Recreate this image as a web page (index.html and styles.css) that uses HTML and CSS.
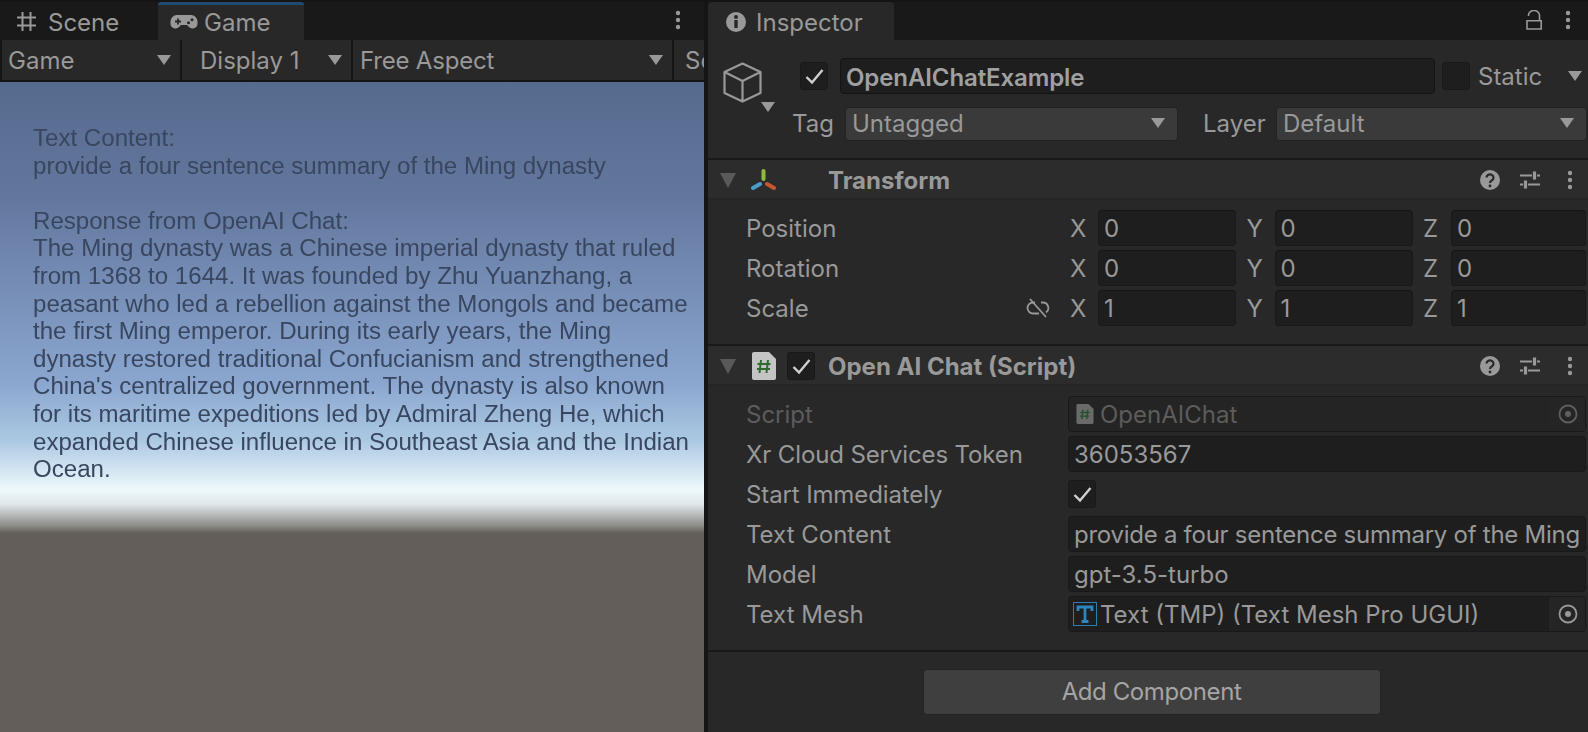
FILE: index.html
```html
<!DOCTYPE html>
<html lang="en">
<head>
<meta charset="utf-8">
<title>Unity Editor</title>
<link rel="stylesheet" href="styles.css">
</head>
<body>
<div class="editor">
  <section class="game-panel">
    <div class="tabbar">
      <div class="tab tab-scene">
        <svg class="tab-icon" viewBox="0 0 21 21"><path d="M6.500 1v19M14.500 1v19M1 6.500h19M1 14.500h19" fill="none" stroke="#999" stroke-width="2"/></svg>
        <span>Scene</span>
      </div>
      <div class="tab tab-game active">
        <svg class="tab-icon-game" viewBox="0 0 28 16"><path d="M7 1h14a6.500 6.500 0 0 1 6.500 6.500v2a5 5 0 0 1-9 3L17 11h-6l-1.500 1.500a5 5 0 0 1-9-3v-2A6.500 6.500 0 0 1 7 1z" fill="#999"/><path d="M5 7.500h6M8 4.500v6" stroke="#262626" stroke-width="1.800"/><circle cx="18.500" cy="8.800" r="1.500" fill="#262626"/><circle cx="22" cy="5.800" r="1.500" fill="#262626"/></svg>
        <span>Game</span>
      </div>
      <div class="spacer"></div>
      <svg class="kebab kebab-left" viewBox="0 0 6 20"><circle cx="3" cy="3" r="2.200"/><circle cx="3" cy="10" r="2.200"/><circle cx="3" cy="17" r="2.200"/></svg>
    </div>
    <div class="toolbar">
      <div class="tool tool-game"><span>Game</span><i class="arrow"></i></div>
      <div class="tool tool-display"><span>Display 1</span><i class="arrow"></i></div>
      <div class="tool tool-aspect"><span>Free Aspect</span><i class="arrow"></i></div>
      <div class="tool tool-scale"><span>Scale</span></div>
    </div>
    <div class="viewport">
      <p class="ui-text">Text Content:<br>provide a four sentence summary of the Ming dynasty<br><br>Response from OpenAI Chat:<br>The Ming dynasty was a Chinese imperial dynasty that ruled<br>from 1368 to 1644. It was founded by Zhu Yuanzhang, a<br>peasant who led a rebellion against the Mongols and became<br>the first Ming emperor. During its early years, the Ming<br>dynasty restored traditional Confucianism and strengthened<br>China's centralized government. The dynasty is also known<br>for its maritime expeditions led by Admiral Zheng He, which<br>expanded Chinese influence in Southeast Asia and the Indian<br>Ocean.</p>
    </div>
  </section>

  <section class="inspector">
    <div class="tabbar">
      <div class="tab tab-inspector">
        <svg class="info-icon" viewBox="0 0 20 20"><circle cx="10" cy="10" r="10" fill="#999"/><rect x="8.300" y="8" width="3.400" height="8" fill="#282828"/><circle cx="10" cy="5" r="2" fill="#282828"/></svg>
        <span>Inspector</span>
      </div>
      <div class="spacer"></div>
      <svg class="lock" viewBox="0 0 16 20"><path d="M2.500 6a5.500 5 0 0 1 11 -1v6M1 10.800h14.200V19H1z" fill="none" stroke="#999" stroke-width="1.600"/></svg>
      <svg class="kebab kebab-right" viewBox="0 0 6 20"><circle cx="3" cy="3" r="2.200"/><circle cx="3" cy="10" r="2.200"/><circle cx="3" cy="17" r="2.200"/></svg>
    </div>

    <div class="object-head">
      <div class="cube-wrap">
        <svg class="cube" viewBox="0 0 39 41"><path d="M19.500 1.500 37.500 10v21l-18 8.500-18-8.500V10zM1.500 10l18 9 18-9M19.500 19v20.500" fill="none" stroke="#999" stroke-width="2.200" stroke-linejoin="round"/></svg>
        <i class="arrow arrow-cube"></i>
      </div>
      <div class="object-rows">
        <div class="name-row">
          <div class="check"><svg viewBox="0 0 20 20"><path d="M2.500 11l5.500 5.500 10.500-12.500" fill="none" stroke="#d0d0d0" stroke-width="2.400"/></svg></div>
          <div class="name-field">OpenAIChatExample</div>
          <div class="check"></div>
          <span class="static-label">Static</span>
          <i class="arrow arrow-static"></i>
        </div>
        <div class="tag-row">
          <span class="tag-label">Tag</span>
          <div class="drop drop-tag"><span>Untagged</span><i class="arrow"></i></div>
          <span class="layer-label">Layer</span>
          <div class="drop drop-layer"><span>Default</span><i class="arrow"></i></div>
        </div>
      </div>
    </div>

    <div class="comp-head">
      <i class="arrow arrow-fold"></i>
      <svg class="axes" viewBox="0 0 25 23"><path d="M12.500 2v8" stroke="#8fb93f" stroke-width="4" stroke-linecap="round"/><path d="M9 15l-7 4" stroke="#4a9cc9" stroke-width="4" stroke-linecap="round"/><path d="M16 15l7 4" stroke="#c9572e" stroke-width="4" stroke-linecap="round"/></svg>
      <span class="comp-title">Transform</span>
      <div class="spacer"></div>
      <svg class="help" viewBox="0 0 20 20"><circle cx="10" cy="10" r="10" fill="#999"/><path d="M6.500 7.500a3.500 3.200 0 1 1 5.200 2.900c-1.200.7-1.700 1.200-1.700 2.600" fill="none" stroke="#282828" stroke-width="2.200"/><circle cx="10" cy="16" r="1.400" fill="#282828"/></svg>
      <svg class="sliders" viewBox="0 0 20 20"><path d="M0 5.500h12M17 5.500h3M0 14.500h3M8 14.500h12" fill="none" stroke="#999" stroke-width="2"/><path d="M14.500 1.500v8M5.500 10.500v8" fill="none" stroke="#999" stroke-width="3.200"/></svg>
      <svg class="kebab kebab-comp" viewBox="0 0 6 20"><circle cx="3" cy="3" r="2.200"/><circle cx="3" cy="10" r="2.200"/><circle cx="3" cy="17" r="2.200"/></svg>
    </div>
    <div class="transform-body">
      <div class="vec-row">
        <span class="label">Position</span><span class="link-slot"></span>
        <span class="axis">X</span><div class="field">0</div>
        <span class="axis">Y</span><div class="field">0</div>
        <span class="axis">Z</span><div class="field field-last">0</div>
      </div>
      <div class="vec-row">
        <span class="label">Rotation</span><span class="link-slot"></span>
        <span class="axis">X</span><div class="field">0</div>
        <span class="axis">Y</span><div class="field">0</div>
        <span class="axis">Z</span><div class="field field-last">0</div>
      </div>
      <div class="vec-row">
        <span class="label">Scale</span>
        <span class="link-slot"><svg class="unlink" viewBox="0 0 24 20"><path d="M9 4.500H7a5.500 5.500 0 0 0 0 11h6M15 4.500h2a5.500 5.500 0 0 1 3 10M4 1l16 18" fill="none" stroke="#999" stroke-width="1.800"/></svg></span>
        <span class="axis">X</span><div class="field">1</div>
        <span class="axis">Y</span><div class="field">1</div>
        <span class="axis">Z</span><div class="field field-last">1</div>
      </div>
    </div>

    <div class="comp-head">
      <i class="arrow arrow-fold"></i>
      <svg class="script-icon" viewBox="0 0 24 28"><path d="M2 0h15l7 7v19a2 2 0 0 1-2 2H2a2 2 0 0 1-2-2V2a2 2 0 0 1 2-2z" fill="#c4c4c4"/><path d="M9 8 7.500 21M16 8l-1.500 13M5.500 12h13M5 17h13" fill="none" stroke="#2f6b2f" stroke-width="2"/></svg>
      <div class="check check-comp"><svg viewBox="0 0 20 20"><path d="M2.500 11l5.500 5.500 10.500-12.500" fill="none" stroke="#d0d0d0" stroke-width="2.400"/></svg></div>
      <span class="comp-title">Open AI Chat (Script)</span>
      <div class="spacer"></div>
      <svg class="help" viewBox="0 0 20 20"><circle cx="10" cy="10" r="10" fill="#999"/><path d="M6.500 7.500a3.500 3.200 0 1 1 5.200 2.900c-1.200.7-1.700 1.200-1.700 2.600" fill="none" stroke="#282828" stroke-width="2.200"/><circle cx="10" cy="16" r="1.400" fill="#282828"/></svg>
      <svg class="sliders" viewBox="0 0 20 20"><path d="M0 5.500h12M17 5.500h3M0 14.500h3M8 14.500h12" fill="none" stroke="#999" stroke-width="2"/><path d="M14.500 1.500v8M5.500 10.500v8" fill="none" stroke="#999" stroke-width="3.200"/></svg>
      <svg class="kebab kebab-comp" viewBox="0 0 6 20"><circle cx="3" cy="3" r="2.200"/><circle cx="3" cy="10" r="2.200"/><circle cx="3" cy="17" r="2.200"/></svg>
    </div>
    <div class="script-body">
      <div class="prop-row disabled">
        <span class="label">Script</span>
        <div class="value value-ref value-dim">
          <svg class="script-icon-small" viewBox="0 0 24 28"><path d="M2 0h15l7 7v19a2 2 0 0 1-2 2H2a2 2 0 0 1-2-2V2a2 2 0 0 1 2-2z" fill="#6a6a6a"/><path d="M9 8 7.500 21M16 8l-1.500 13M5.500 12h13M5 17h13" fill="none" stroke="#24502a" stroke-width="2"/></svg>
          <span class="ref-text">OpenAIChat</span>
          <span class="picker"><svg viewBox="0 0 20 20"><circle cx="10" cy="10" r="8.500" fill="none" stroke="#5f5f5f" stroke-width="1.800"/><circle cx="10" cy="10" r="3" fill="#5f5f5f"/></svg></span>
        </div>
      </div>
      <div class="prop-row"><span class="label label-tight">Xr Cloud Services Token</span><div class="value">36053567</div></div>
      <div class="prop-row">
        <span class="label label-tight">Start Immediately</span>
        <div class="check"><svg viewBox="0 0 20 20"><path d="M2.500 11l5.500 5.500 10.500-12.500" fill="none" stroke="#d0d0d0" stroke-width="2.400"/></svg></div>
      </div>
      <div class="prop-row"><span class="label">Text Content</span><div class="value value-clip">provide a four sentence summary of the Ming</div></div>
      <div class="prop-row"><span class="label">Model</span><div class="value">gpt-3.5-turbo</div></div>
      <div class="prop-row">
        <span class="label">Text Mesh</span>
        <div class="value value-ref">
          <svg class="tmp-icon" viewBox="0 0 24 24"><rect x=".5" y=".5" width="23" height="23" fill="none" stroke="#2a7fb0"/><path d="M5 9V5h14v4M12 5v15M8.500 19.500h7" fill="none" stroke="#2a86bd" stroke-width="2.800"/></svg>
          <span class="ref-text">Text (TMP) (Text Mesh Pro UGUI)</span>
          <span class="picker"><svg viewBox="0 0 20 20"><circle cx="10" cy="10" r="8.500" fill="none" stroke="#999" stroke-width="1.800"/><circle cx="10" cy="10" r="3" fill="#999"/></svg></span>
        </div>
      </div>
    </div>
    <div class="add-wrap"><div class="add-btn">Add Component</div></div>
  </section>
</div>
</body>
</html>
```
FILE: styles.css
```css
* { box-sizing: border-box; }
html, body { margin: 0; padding: 0; }
body { width: 1588px; height: 732px; overflow: hidden; background: #151515; font-family: Inter, "Noto Sans", sans-serif; font-size: 24px; color: #999; }
.editor { display: flex; width: 1588px; height: 732px; }
.spacer { flex: 1; }
.arrow { display: block; flex: none; width: 0; height: 0; border-left: 7.500px solid transparent; border-right: 7.500px solid transparent; border-top: 10px solid #999; }

.game-panel { width: 704px; flex: none; display: flex; flex-direction: column; }
.inspector { width: 880px; margin-left: 4px; flex: none; background: #282828; display: flex; flex-direction: column; }

.tabbar { height: 40px; flex: none; display: flex; align-items: stretch; background: #191919; border-top: 2px solid #141414; }
.tab { display: flex; align-items: center; color: #999; height: 38px; padding-top: 2px; }
.tab-scene { width: 158px; padding-left: 16px; gap: 11px; }
.tab-icon { width: 21px; height: 21px; margin-top: -2px; }
.tab-game { width: 146px; padding-left: 12px; gap: 6px; background: #282828; border-top: 3px solid #1f4a72; border-radius: 3px 3px 0 0; padding-top: 0; padding-bottom: 1px; }
.tab-icon-game { width: 28px; height: 16px; }
.kebab { width: 6px; height: 20px; fill: #999; align-self: center; flex: none; }
.kebab-left { margin-right: 23px; margin-top: -2px; }
.kebab-right { margin-right: 17px; margin-top: -2px; margin-left: 23px; }
.lock { width: 16px; height: 20px; align-self: center; margin-top: -2px; }
.tab-inspector { width: 186px; padding-left: 18px; gap: 10px; background: #282828; border-radius: 4px 4px 0 0; }
.info-icon { width: 20px; height: 20px; }

.toolbar { height: 42px; flex: none; display: flex; align-items: flex-start; background: #151515; gap: 2px; padding-left: 2px; overflow: hidden; }
.tool { display: flex; align-items: center; justify-content: space-between; background: #282828; height: 40px; padding: 0 9px 0 6px; white-space: nowrap; }
.tool-game { width: 178px; }
.tool-display { width: 169px; padding-left: 18px; }
.tool-aspect { width: 319px; padding-left: 7px; }
.tool-aspect span { letter-spacing: -.2px; }
.tool-scale { flex: 1; min-width: 0; overflow: hidden; padding-left: 11px; padding-right: 0; justify-content: flex-start; }

.viewport { flex: 1; background: linear-gradient(180deg, #566a8e 0, #64789f 120px, #8aa6cf 300px, #abc8e2 358px, #eef9fb 408px, #dfe8ea 422px, #8b8a85 444px, #645e5b 451px); padding: 42px 0 0 33px; }
.ui-text { margin: 0; font-family: "Liberation Sans", Arial, sans-serif; font-size: 24.080px; line-height: 27.6px; color: #38465f; filter: blur(.7px); white-space: nowrap; }

.object-head { display: flex; height: 120px; flex: none; border-bottom: 2px solid #191919; padding-top: 18px; padding-left: 15px; }
.cube-wrap { width: 77px; flex: none; position: relative; }
.cube { width: 39px; height: 41px; display: block; margin-top: 4px; }
.arrow-cube { position: absolute; left: 38px; top: 44px; }
.object-rows { flex: 1; display: flex; flex-direction: column; }
.name-row { display: flex; align-items: center; height: 36px; }
.check { width: 28px; height: 28px; flex: none; background: #1e1e1e; border: 1px solid #191919; border-radius: 3px; display: flex; align-items: center; justify-content: center; }
.check svg { width: 20px; height: 20px; }
.name-field { width: 595px; height: 36px; margin-left: 12px; margin-right: 7px; background: #1e1e1e; border: 1px solid #141414; border-radius: 4px; padding: 2px 0 0 5px; display: flex; align-items: center; font-weight: 600; color: #a0a0a0; letter-spacing: -.1px; }
.static-label { margin-left: 8px; }
.arrow-static { margin-left: 26px; }
.tag-row { display: flex; align-items: center; height: 34px; margin-top: 13px; margin-left: -8px; }
.tag-label { width: 53px; flex: none; padding-bottom: 2px; }
.drop { height: 34px; display: flex; align-items: center; justify-content: space-between; background: #3a3a3a; border: 1px solid #232323; border-radius: 4px; padding: 0 12px 2px 6px; }
.drop-tag { width: 333px; }
.layer-label { width: 73px; margin-left: 25px; flex: none; padding-bottom: 2px; }
.drop-layer { width: 311px; }

.comp-head { height: 40px; flex: none; display: flex; align-items: center; padding: 2px 15px 0 12px; background: #2c2c2c; border-bottom: 2px solid #252525; }
.arrow-fold { border-left-width: 8.500px; border-right-width: 8.500px; border-top: 15px solid #5a5a5a; }
.axes { width: 25px; height: 23px; margin-left: 15px; flex: none; }
.comp-title { font-weight: 700; color: #999; margin-left: 52px; }
.help { width: 20px; height: 20px; margin-right: 20px; flex: none; }
.sliders { width: 20px; height: 20px; margin-right: 27px; flex: none; }
.kebab-comp { margin: 0; }

.transform-body { height: 146px; flex: none; padding-top: 10px; border-bottom: 2px solid #191919; display: flex; flex-direction: column; gap: 4px; }
.vec-row { display: flex; align-items: center; height: 36px; padding-left: 38px; padding-right: 2px; }
.label { color: #999; flex: none; }
.vec-row .label { width: 280px; }
.link-slot { width: 44px; flex: none; display: flex; }
.unlink { width: 24px; height: 20px; }
.axis { width: 28px; flex: none; }
.field { width: 138px; height: 36px; margin-right: 10.500px; background: #1e1e1e; border: 1px solid #191919; border-top-color: #141414; border-radius: 4px; padding-left: 5px; display: flex; align-items: center; }
.field-last { flex: 1; margin-right: 0; }

.script-body { height: 266px; flex: none; padding-top: 8px; border-bottom: 2px solid #191919; display: flex; flex-direction: column; }
.prop-row { display: flex; align-items: center; height: 40px; padding-left: 38px; }
.prop-row .label { width: 322px; }
.prop-row .label-tight { letter-spacing: -.12px; }
.prop-row.disabled .label { color: #5c5c5c; }
.value { width: 518px; height: 36px; background: #1e1e1e; border: 1px solid #191919; border-radius: 4px; padding-left: 5px; display: flex; align-items: center; overflow: hidden; white-space: nowrap; }
.value-clip { letter-spacing: -.26px; }
.value-ref { padding-left: 4px; padding-right: 0; }
.value-dim { color: #5c5c5c; background: #242424; }
.ref-text { flex: 1; margin-left: 3px; }
.script-icon { width: 24px; height: 28px; margin-left: 16px; flex: none; }
.check-comp { margin-left: 11px; }
.comp-head .check-comp + .comp-title { margin-left: 13px; }
.script-icon-small { width: 18px; height: 20px; flex: none; margin-left: 3px; }
.script-icon-small + .ref-text { margin-left: 6px; }
.tmp-icon { width: 24px; height: 24px; flex: none; }
.picker { width: 36px; height: 34px; flex: none; background: #252525; display: flex; align-items: center; justify-content: center; padding-left: 2px; }
.picker svg { width: 20px; height: 20px; }

.add-wrap { flex: 1; display: flex; justify-content: center; padding-top: 17px; }
.add-btn { width: 458px; height: 46px; margin-left: 7px; padding-bottom: 1px; background: #3f3f3f; border: 1px solid #232323; border-radius: 4px; display: flex; align-items: center; justify-content: center; color: #a5a5a5; letter-spacing: -.4px; }
```
